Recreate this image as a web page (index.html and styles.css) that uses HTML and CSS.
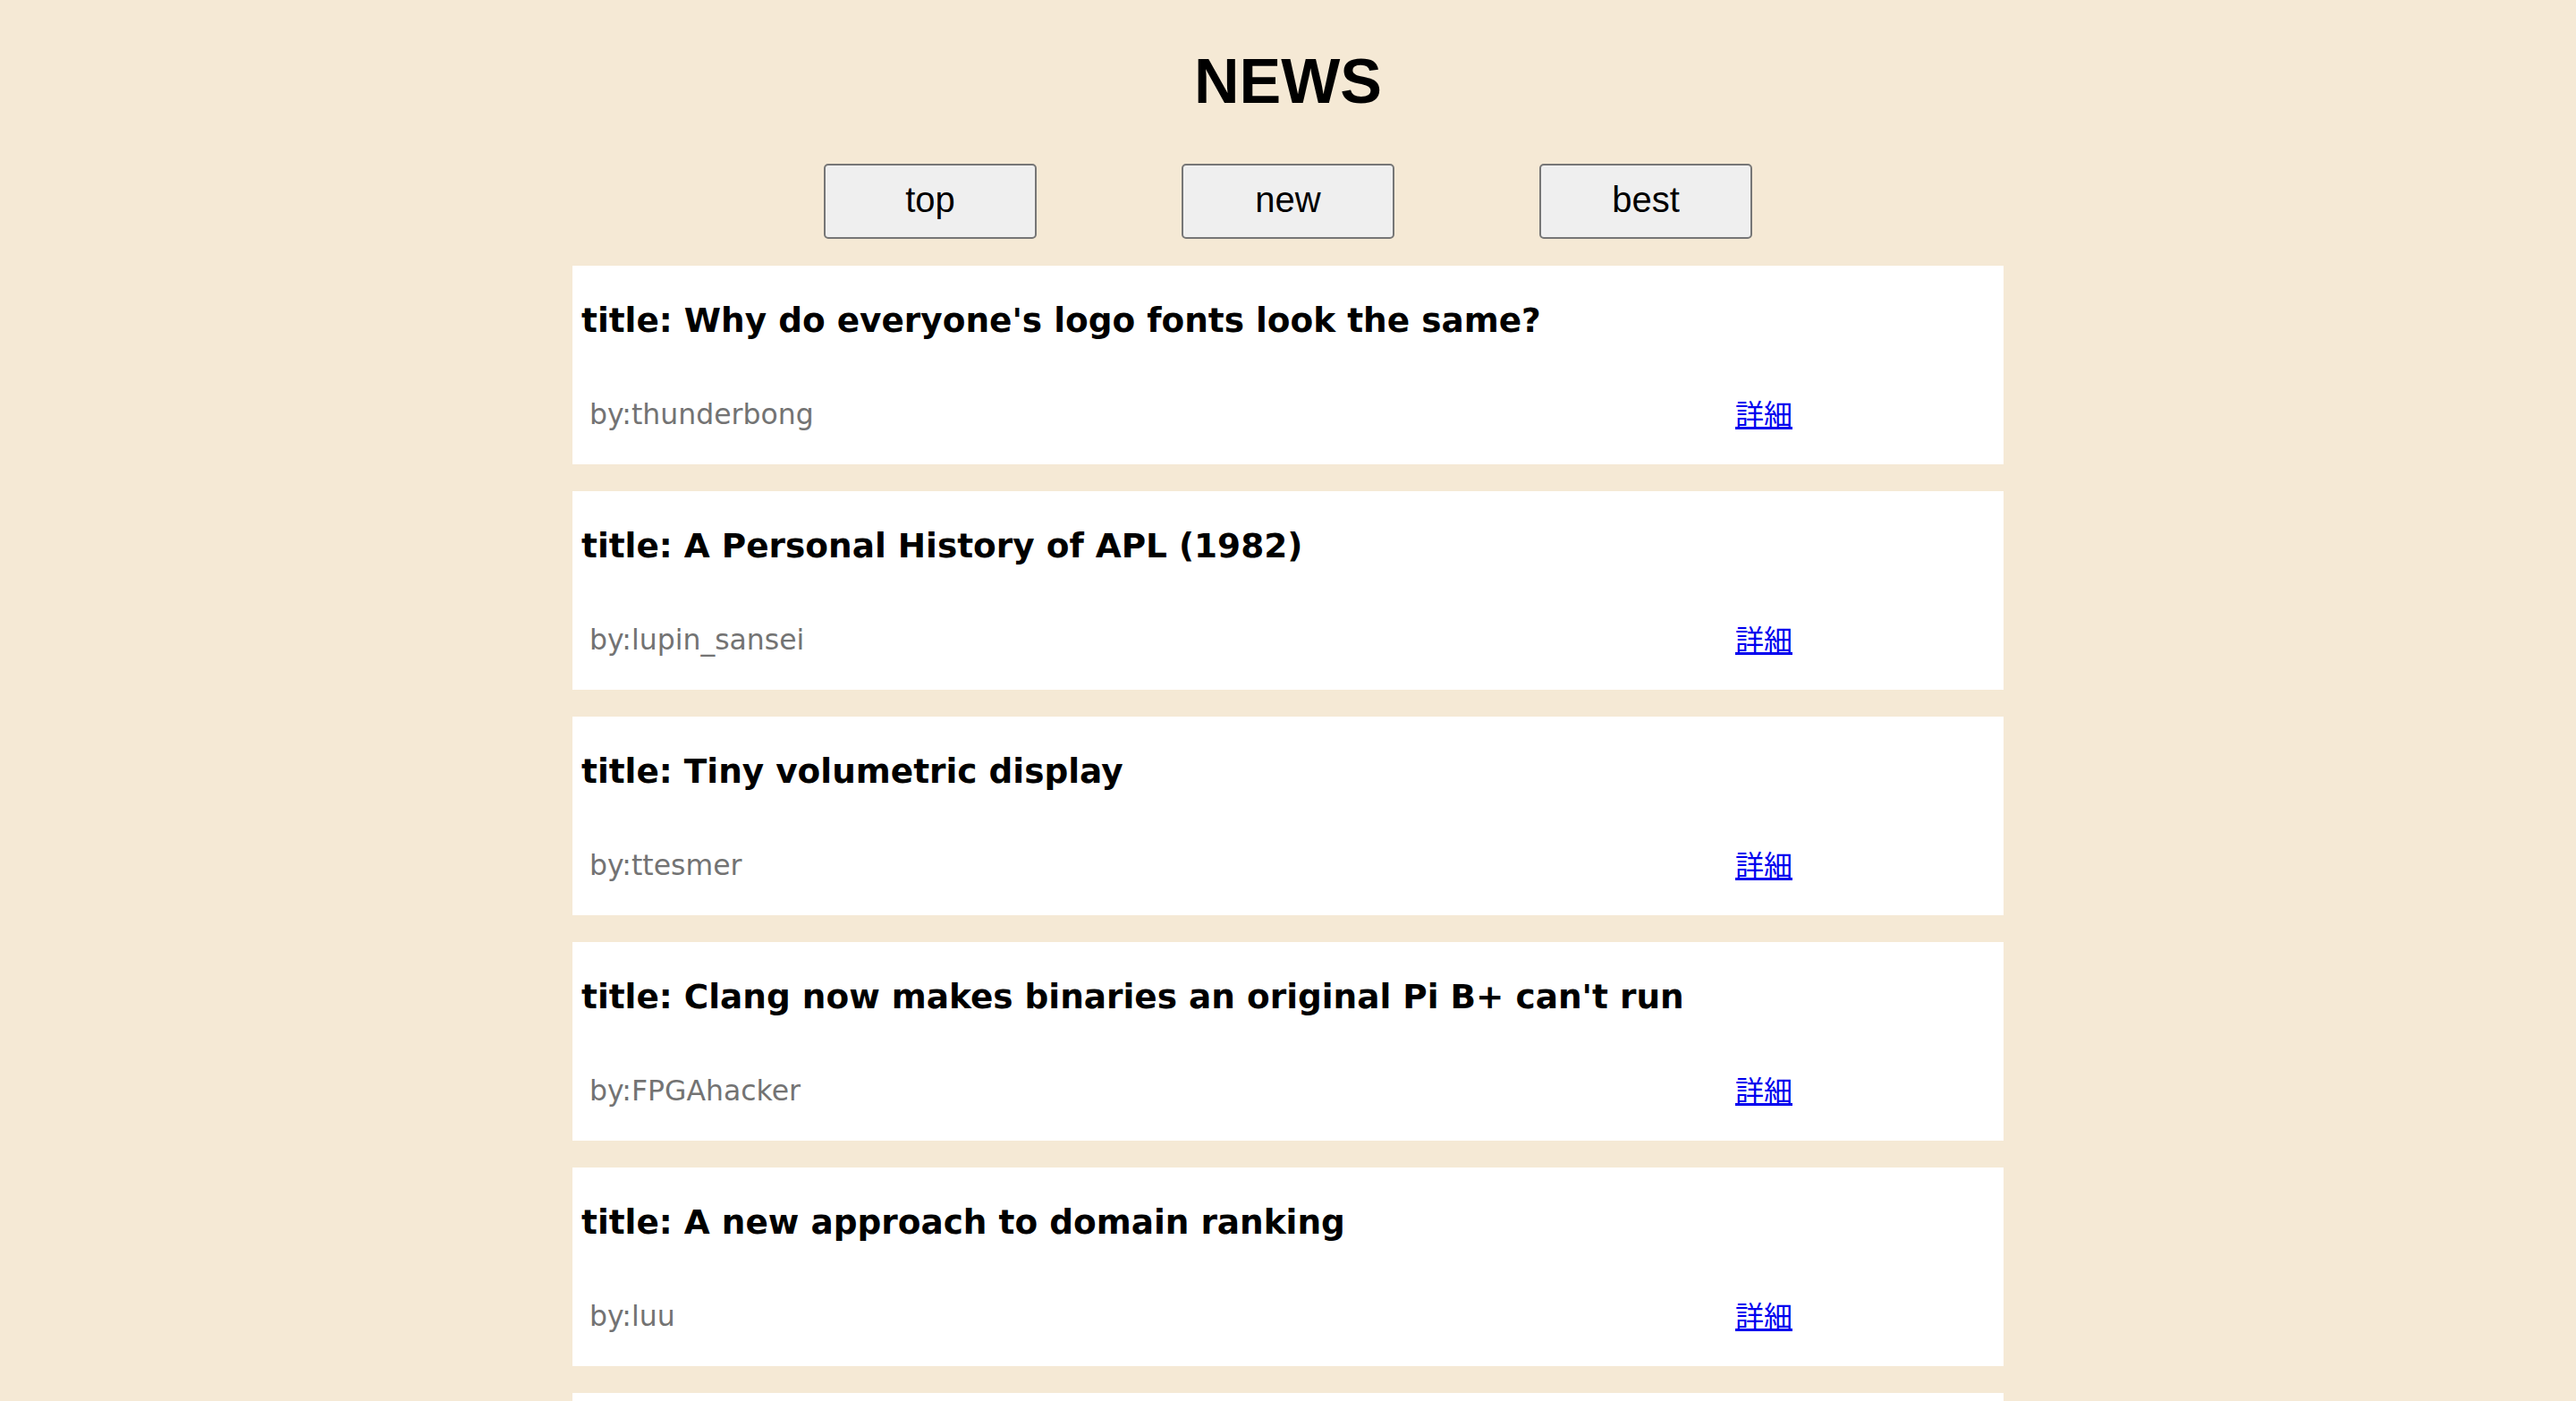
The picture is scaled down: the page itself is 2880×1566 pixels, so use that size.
FILE: index.html
```html
<!DOCTYPE html>
<html lang="ja">
<head>
<meta charset="utf-8">
<title>NEWS</title>
<link rel="stylesheet" href="styles.css">
</head>
<body>
<h1 class="page-title">NEWS</h1>
<nav class="tabs">
  <button class="tab" type="button">top</button>
  <button class="tab" type="button">new</button>
  <button class="tab" type="button">best</button>
</nav>
<ul class="list">
  <li class="card">
    <h3 class="card-title">title: Why do everyone's logo fonts look the same?</h3>
    <div class="meta"><span class="by">by:thunderbong</span><a class="detail" href="#">詳細</a></div>
  </li>
  <li class="card">
    <h3 class="card-title">title: A Personal History of APL (1982)</h3>
    <div class="meta"><span class="by">by:lupin_sansei</span><a class="detail" href="#">詳細</a></div>
  </li>
  <li class="card">
    <h3 class="card-title">title: Tiny volumetric display</h3>
    <div class="meta"><span class="by">by:ttesmer</span><a class="detail" href="#">詳細</a></div>
  </li>
  <li class="card">
    <h3 class="card-title">title: Clang now makes binaries an original Pi B+ can't run</h3>
    <div class="meta"><span class="by">by:FPGAhacker</span><a class="detail" href="#">詳細</a></div>
  </li>
  <li class="card">
    <h3 class="card-title">title: A new approach to domain ranking</h3>
    <div class="meta"><span class="by">by:luu</span><a class="detail" href="#">詳細</a></div>
  </li>
  <li class="card card-partial"></li>
</ul>
</body>
</html>
```
FILE: styles.css
```css
html, body {
  margin: 0;
  padding: 0;
}

body {
  background: #f5e9d5;
  padding-top: 51px;
  font-family: "DejaVu Sans", "Noto Sans CJK JP", sans-serif;
  color: #000;
}

.page-title {
  margin: 0 0 52px;
  text-align: center;
  font-family: "Liberation Sans", Arial, sans-serif;
  font-weight: 700;
  font-size: 70px;
  line-height: 80px;
}

.tabs {
  width: 1200px;
  margin: 0 auto 30px;
  display: flex;
  justify-content: space-around;
}

.tab {
  box-sizing: border-box;
  width: 238px;
  height: 84px;
  padding: 0 0 4px;
  border: 2px solid #767676;
  border-radius: 5px;
  background: #efefef;
  color: #000;
  font-family: "Liberation Sans", Arial, sans-serif;
  font-size: 40px;
}

.list {
  width: 1600px;
  margin: 0 auto;
  padding: 0;
  list-style: none;
  display: flex;
  flex-direction: column;
  gap: 30px;
}

.card {
  background: #fff;
  padding: 39px 10px 37px;
}

.card-partial {
  box-sizing: border-box;
  height: 222px;
}

.card-title {
  margin: 0;
  font-family: "DejaVu Sans", "Noto Sans CJK JP", sans-serif;
  font-weight: 700;
  font-size: 37.44px;
  line-height: 44px;
}

.meta {
  margin-top: 64px;
  padding: 0 226px 0 9px;
  height: 38px;
  display: flex;
  justify-content: space-between;
  align-items: flex-start;
}

.by {
  font-family: "DejaVu Sans", "Noto Sans CJK JP", sans-serif;
  font-size: 31.5px;
  line-height: 38px;
  color: #737373;
}

.detail {
  font-family: "Noto Sans CJK JP", sans-serif;
  font-size: 32px;
  line-height: 32px;
  margin-top: 1px;
  color: #0000ee;
  text-decoration: underline;
}
```
